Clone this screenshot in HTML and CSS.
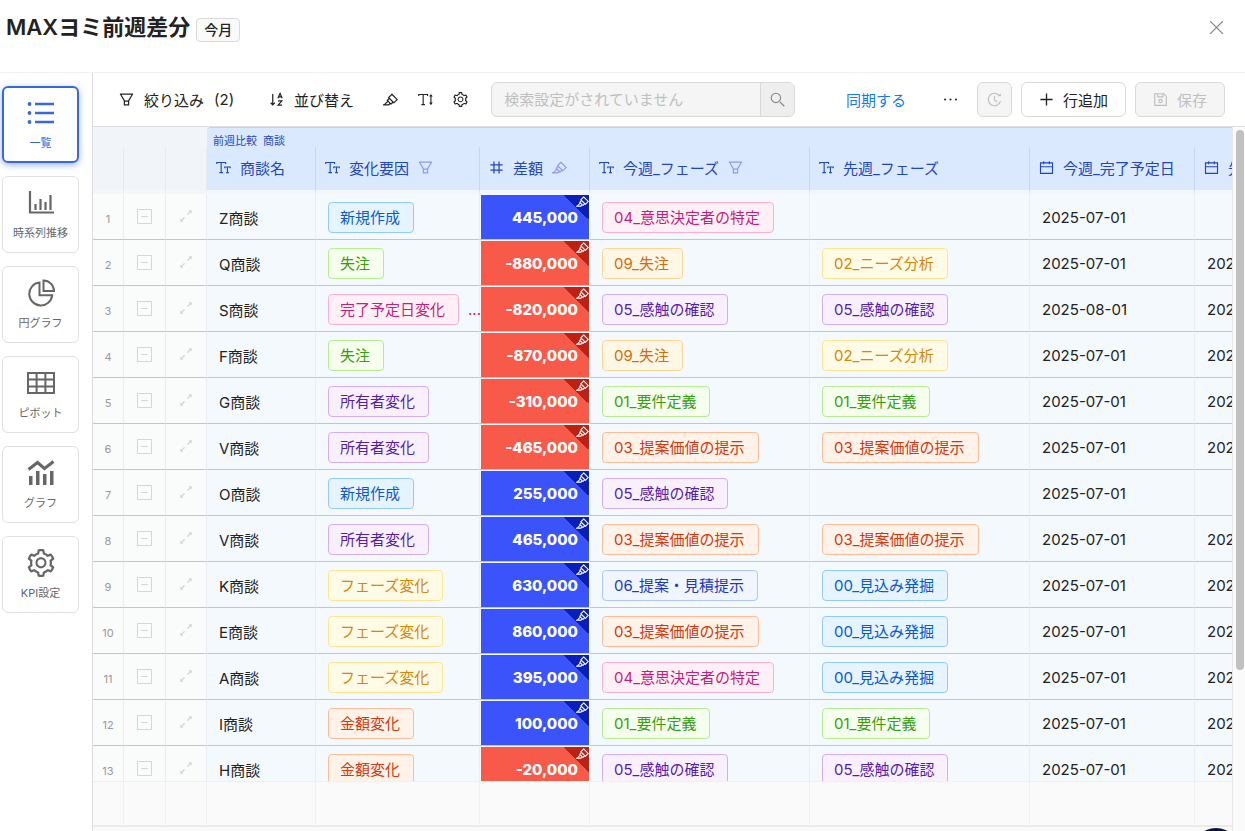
FILE: index.html
```html
<!DOCTYPE html>
<html lang="ja">
<head>
    <meta charset="UTF-8">
    <meta name="viewport" content="width=device-width, initial-scale=1.0">
    <title>MAXヨミ前週差分</title>
    <link rel="stylesheet" href="styles.css">
</head>
<body>
    <!-- アイコン定義 -->
    <svg class="icon-defs" aria-hidden="true">
        <symbol id="i-filter" viewBox="64 64 896 896"><path d="M880.1 154H143.9c-24.5 0-39.8 26.7-27.5 48L349 597.4V838c0 17.7 14.2 32 31.8 32h262.4c17.6 0 31.8-14.3 31.8-32V597.4L907.7 202c12.2-21.3-3.1-48-27.6-48zM603.4 798H420.6V642h182.9v156zm9.6-236.6l-9.5 16.6h-183l-9.5-16.6L212.7 226h598.6L613 561.4z"/></symbol>
        <symbol id="i-highlight" viewBox="64 64 896 896"><path d="M957.6 507.4L603.2 158.2a7.9 7.9 0 00-11.2 0L353.3 393.4a8.03 8.03 0 00-.1 11.3l.1.1 40 39.4-117.2 115.3a8.03 8.03 0 00-.1 11.3l.1.1 39.5 38.9-189.1 187H72.1c-4.4 0-8.1 3.6-8.1 8V860c0 4.4 3.6 8 8 8h344.9c2.1 0 4.1-.8 5.6-2.3l76.1-75.6 40.4 39.8a7.9 7.9 0 0011.2 0l117.1-115.6 40.1 39.5a7.9 7.9 0 0011.2 0l238.7-235.2c3.4-3 3.4-8 .3-11.2zM389.8 796.2H229.6l134.4-133 80.1 78.9-54.3 54.1zm154.8-62.1L373.2 565.2l68.6-67.6 171.4 168.9-68.6 67.6zM713.1 658L450.3 399.1 597.6 254l262.8 259-147.3 145z"/></symbol>
        <symbol id="i-setting" viewBox="64 64 896 896"><path d="M924.8 625.7l-65.5-56c3.1-19 4.7-38.4 4.7-57.8s-1.6-38.8-4.7-57.8l65.5-56a32.03 32.03 0 009.3-35.2l-.9-2.6a443.74 443.74 0 00-79.7-137.9l-1.8-2.1a32.12 32.12 0 00-35.1-9.5l-81.3 28.9c-30-24.6-63.5-44-99.7-57.6l-15.7-85a32.05 32.05 0 00-25.8-25.7l-2.7-.5c-52.1-9.4-106.9-9.4-159 0l-2.7.5a32.05 32.05 0 00-25.8 25.7l-15.8 85.4a351.86 351.86 0 00-99 57.4l-81.9-29.1a32 32 0 00-35.1 9.5l-1.8 2.1a446.02 446.02 0 00-79.7 137.9l-.9 2.6c-4.5 12.5-.8 26.5 9.3 35.2l66.3 56.6c-3.1 18.8-4.6 38-4.6 57.1 0 19.2 1.5 38.4 4.6 57.1L99 625.5a32.03 32.03 0 00-9.3 35.2l.9 2.6c18.1 50.4 44.9 96.9 79.7 137.9l1.8 2.1a32.12 32.12 0 0035.1 9.5l81.9-29.1c29.8 24.5 63.1 43.9 99 57.4l15.8 85.4a32.05 32.05 0 0025.8 25.7l2.7.5a449.4 449.4 0 00159 0l2.7-.5a32.05 32.05 0 0025.8-25.7l15.7-85a350 350 0 0099.7-57.6l81.3 28.9a32 32 0 0035.1-9.5l1.8-2.1c34.8-41.1 61.6-87.5 79.7-137.9l.9-2.6c4.5-12.3.8-26.3-9.3-35zM788.3 465.9c2.5 15.1 3.8 30.6 3.8 46.1s-1.3 31-3.8 46.1l-6.6 40.1 74.7 63.9a370.03 370.03 0 01-42.6 73.6L721 702.8l-31.4 25.8c-23.9 19.6-50.5 35-79.3 45.8l-38.1 14.3-17.9 97a377.5 377.5 0 01-85 0l-17.9-97.2-37.8-14.5c-28.5-10.8-55-26.2-78.7-45.7l-31.4-25.9-93.4 33.2c-17-22.9-31.2-47.6-42.6-73.6l75.5-64.5-6.5-40c-2.4-14.9-3.7-30.3-3.7-45.5 0-15.3 1.2-30.6 3.7-45.5l6.5-40-75.5-64.5c11.3-26.1 25.6-50.7 42.6-73.6l93.4 33.2 31.4-25.9c23.7-19.5 50.2-34.9 78.7-45.7l37.9-14.3 17.9-97.2c28.1-3.2 56.8-3.2 85 0l17.9 97 38.1 14.3c28.7 10.8 55.4 26.2 79.3 45.8l31.4 25.8 92.8-32.9c17 22.9 31.2 47.6 42.6 73.6L781.8 426l6.5 39.9zM512 326c-97.2 0-176 78.8-176 176s78.8 176 176 176 176-78.8 176-176-78.8-176-176-176zm79.2 255.2A111.6 111.6 0 01512 614c-29.9 0-58-11.7-79.2-32.8A111.6 111.6 0 01400 502c0-29.9 11.7-58 32.8-79.2C454 401.6 482.1 390 512 390c29.9 0 58 11.6 79.2 32.8A111.6 111.6 0 01624 502c0 29.9-11.7 58-32.8 79.2z"/></symbol>
        <symbol id="i-sort" viewBox="0 0 16 16"><path d="M4 2v11.500M1.800 11.500L4 13.700l2.200-2.200M9.500 6.600l2.300-5 2.300 5M10.300 5.200h3M9.700 9.500h4L9.700 14h4.200" fill="none" stroke="currentColor" stroke-width="1.300"/></symbol>
        <symbol id="i-fontsize" viewBox="0 0 16 16"><path d="M.8 4.200V2.600h9.400v1.600M5.500 2.600v10.800M3.600 13.400h3.800M13.800 3.600v8.800" fill="none" stroke="currentColor" stroke-width="1.200"/><path d="M11.900 4.800L13.800 2l1.900 2.800zM11.900 11.200l1.900 2.800 1.900-2.800z"/></symbol>
        <symbol id="i-text" viewBox="0 0 16 16"><path d="M.8 4.200V2.600h9.400v1.600M5.500 2.600v10.800M3.600 13.400h3.800M9.300 8.800V7.500h5.900v1.300M12.200 7.500v5.900M10.800 13.400h2.900" fill="none" stroke="currentColor" stroke-width="1.200"/></symbol>
        <symbol id="i-number" viewBox="0 0 16 16"><path d="M1.500 5.300h13M1.500 10.700h13M5.300 1.500v13M10.700 1.500v13" fill="none" stroke="currentColor" stroke-width="1.300"/></symbol>
        <symbol id="i-calendar" viewBox="0 0 16 16"><path d="M1.600 3h12.800v11.200H1.600zM1.600 7.200h12.800M5 1.200v3.400M11 1.200v3.400" fill="none" stroke="currentColor" stroke-width="1.200"/></symbol>
        <symbol id="i-search" viewBox="0 0 16 16"><path d="M10.500 10.500l4.700 4.700" fill="none" stroke="currentColor" stroke-width="1.400"/><circle cx="6.300" cy="6.300" r="5" fill="none" stroke="currentColor" stroke-width="1.200"/></symbol>
        <symbol id="i-history" viewBox="0 0 16 16"><path d="M13.300 4A6.600 6.600 0 1 0 14.400 9.800M8 4.200v4.200l2.800 2.200" fill="none" stroke="currentColor" stroke-width="1.200"/><path d="M11 4.500h3.800V1.500z"/></symbol>
        <symbol id="i-save" viewBox="0 0 16 16"><path d="M1.800 1.800h9.800l2.600 2.600v9.800H1.800zM5 1.800v3.400h5.600V1.800" fill="none" stroke="currentColor" stroke-width="1.200"/><circle cx="8" cy="9.700" r="1.800" fill="none" stroke="currentColor" stroke-width="1.200"/></symbol>
        <symbol id="i-plus" viewBox="0 0 16 16"><path d="M8 1.500v13M1.500 8h13" fill="none" stroke="currentColor" stroke-width="1.400"/></symbol>
        <symbol id="i-close" viewBox="0 0 16 16"><path d="M2 2l12 12M14 2l-12 12" fill="none" stroke="currentColor" stroke-width="1.300"/></symbol>
        <symbol id="i-more" viewBox="0 0 16 16"><circle cx="2.200" cy="8" r="1.100"/><circle cx="8" cy="8" r="1.100"/><circle cx="13.800" cy="8" r="1.100"/></symbol>
        <symbol id="i-minus" viewBox="0 0 16 16"><path d="M.5 .5h15v15H.5zM4.500 8h7" fill="none" stroke="currentColor"/></symbol>
        <symbol id="i-expand" viewBox="0 0 14 14"><path d="M8.400 5.600l3-3M5.600 8.400l-3 3" fill="none" stroke="currentColor" stroke-width="1.300"/><path d="M9.600 1.300h3.100v3.100zM1.300 9.600v3.100h3.100z"/></symbol>
        <symbol id="i-list" viewBox="0 0 28 28"><path d="M8 5h19M8 14h19M8 23h19" fill="none" stroke="currentColor" stroke-width="2.400"/><circle cx="2.500" cy="5" r="1.900"/><circle cx="2.500" cy="14" r="1.900"/><circle cx="2.500" cy="23" r="1.900"/></symbol>
        <symbol id="i-bars" viewBox="0 0 28 28"><path d="M3 2v21.500h24M8.500 21v-6M13.500 21V10M18.500 21v-8M23.500 21V6" fill="none" stroke="currentColor" stroke-width="2.200"/></symbol>
        <symbol id="i-pie" viewBox="0 0 28 28"><path d="M12.500 3.500A11.500 11.500 0 1 0 25.200 16.300H12.500zM16.500 1.500v10.500H27A10.600 10.600 0 0 0 16.500 1.500z" fill="none" stroke="currentColor" stroke-width="2"/></symbol>
        <symbol id="i-table" viewBox="0 0 28 28"><path d="M1 4h26v20H1zM1 10.600h26M1 17.400h26M9.600 4v20M18.400 4v20" fill="none" stroke="currentColor" stroke-width="2"/></symbol>
        <symbol id="i-graph" viewBox="0 0 28 28"><path d="M1.500 10.500l9-7 7 6 9-7" fill="none" stroke="currentColor" stroke-width="3"/><path d="M2 17h3.500v9H2zM9 12h3.500v14H9zM16 15h3.500v11H16zM23 12h3.500v14H23z"/></symbol>
    </svg>

    <header class="page-header">
        <h1>MAXヨミ前週差分</h1>
        <span class="period">今月</span>
        <button type="button" class="btn-plain btn-close" aria-label="閉じる"><svg class="icon"><use href="#i-close"/></svg></button>
    </header>

    <div class="layout">
        <nav class="sidebar">
            <a href="#" class="view-card active"><svg class="view-icon"><use href="#i-list"/></svg><span>一覧</span></a>
            <a href="#" class="view-card"><svg class="view-icon"><use href="#i-bars"/></svg><span>時系列推移</span></a>
            <a href="#" class="view-card"><svg class="view-icon"><use href="#i-pie"/></svg><span>円グラフ</span></a>
            <a href="#" class="view-card"><svg class="view-icon"><use href="#i-table"/></svg><span>ピボット</span></a>
            <a href="#" class="view-card"><svg class="view-icon"><use href="#i-graph"/></svg><span>グラフ</span></a>
            <a href="#" class="view-card"><svg class="view-icon"><use href="#i-setting"/></svg><span>KPI設定</span></a>
        </nav>

        <main class="main">
            <div class="toolbar">
                <div class="tools">
                    <button type="button" class="btn-plain"><svg class="icon"><use href="#i-filter"/></svg><span>絞り込み</span><span>(2)</span></button>
                    <button type="button" class="btn-plain"><svg class="icon"><use href="#i-sort"/></svg><span>並び替え</span></button>
                    <div class="icon-tools">
                        <button type="button" class="btn-plain" aria-label="ハイライト"><svg class="icon"><use href="#i-highlight"/></svg></button>
                        <button type="button" class="btn-plain" aria-label="文字サイズ"><svg class="icon"><use href="#i-fontsize"/></svg></button>
                        <button type="button" class="btn-plain" aria-label="設定"><svg class="icon"><use href="#i-setting"/></svg></button>
                    </div>
                </div>
                <form class="search">
                    <input type="text" aria-label="検索" placeholder="検索設定がされていません" disabled>
                    <button type="button" aria-label="検索する" disabled><svg class="icon"><use href="#i-search"/></svg></button>
                </form>
                <div class="actions">
                    <button type="button" class="btn-plain btn-sync">同期する</button>
                    <button type="button" class="btn-plain btn-more" aria-label="その他"><svg class="icon"><use href="#i-more"/></svg></button>
                    <button type="button" class="btn btn-square" aria-label="履歴" disabled><svg class="icon"><use href="#i-history"/></svg></button>
                    <button type="button" class="btn"><svg class="icon"><use href="#i-plus"/></svg>行追加</button>
                    <button type="button" class="btn" disabled><svg class="icon"><use href="#i-save"/></svg>保存</button>
                </div>
            </div>

            <div class="grid-area">
                <div class="grid">
                    <div class="grid-scroll">
                        <table>
                            <colgroup>
                                <col class="c-no"><col class="c-check"><col class="c-open"><col class="c-name"><col class="c-reason">
                                <col class="c-diff"><col class="c-phase"><col class="c-phase"><col class="c-date"><col class="c-date">
                            </colgroup>
                            <thead>
                                <tr class="group-row">
                                    <td colspan="3"></td>
                                    <th colspan="7" scope="colgroup"><span>前週比較</span><span>商談</span></th>
                                </tr>
                                <tr class="head-row">
                                    <td></td>
                                    <td></td>
                                    <td></td>
                                    <th scope="col"><div class="head"><svg class="icon"><use href="#i-text"/></svg>商談名</div></th>
                                    <th scope="col"><div class="head"><svg class="icon"><use href="#i-text"/></svg>変化要因<svg class="icon faded"><use href="#i-filter"/></svg></div></th>
                                    <th scope="col"><div class="head"><svg class="icon"><use href="#i-number"/></svg>差額<svg class="icon faded"><use href="#i-highlight"/></svg></div></th>
                                    <th scope="col"><div class="head"><svg class="icon"><use href="#i-text"/></svg>今週_フェーズ<svg class="icon faded"><use href="#i-filter"/></svg></div></th>
                                    <th scope="col"><div class="head"><svg class="icon"><use href="#i-text"/></svg>先週_フェーズ</div></th>
                                    <th scope="col"><div class="head"><svg class="icon"><use href="#i-calendar"/></svg>今週_完了予定日</div></th>
                                    <th scope="col"><div class="head"><svg class="icon"><use href="#i-calendar"/></svg>先週_完了予定日</div></th>
                                </tr>
                            </thead>
                            <tbody id="rows"></tbody>
                        </table>
                    </div>
                    <div class="grid-foot">
                        <span></span><span></span><span></span><span></span><span></span><span></span><span></span><span></span><span></span><span></span>
                    </div>
                </div>
                <div class="scrollbar"><div class="thumb"></div></div>
            </div>
        </main>
    </div>

    <button type="button" class="chat" aria-label="チャット"></button>

    <script>
        // 商談名, 変化要因, 差額, 今週フェーズ, 先週フェーズ, 今週完了予定日, 先週完了予定日
        const rows = [
            ['Z商談', '新規作成', 445000, '04_意思決定者の特定', '', '2025-07-01', ''],
            ['Q商談', '失注', -880000, '09_失注', '02_ニーズ分析', '2025-07-01', '2025-07-01'],
            ['S商談', '完了予定日変化', -820000, '05_感触の確認', '05_感触の確認', '2025-08-01', '2025-07-01'],
            ['F商談', '失注', -870000, '09_失注', '02_ニーズ分析', '2025-07-01', '2025-07-01'],
            ['G商談', '所有者変化', -310000, '01_要件定義', '01_要件定義', '2025-07-01', '2025-07-01'],
            ['V商談', '所有者変化', -465000, '03_提案価値の提示', '03_提案価値の提示', '2025-07-01', '2025-07-01'],
            ['O商談', '新規作成', 255000, '05_感触の確認', '', '2025-07-01', ''],
            ['V商談', '所有者変化', 465000, '03_提案価値の提示', '03_提案価値の提示', '2025-07-01', '2025-07-01'],
            ['K商談', 'フェーズ変化', 630000, '06_提案・見積提示', '00_見込み発掘', '2025-07-01', '2025-07-01'],
            ['E商談', 'フェーズ変化', 860000, '03_提案価値の提示', '00_見込み発掘', '2025-07-01', '2025-07-01'],
            ['A商談', 'フェーズ変化', 395000, '04_意思決定者の特定', '00_見込み発掘', '2025-07-01', '2025-07-01'],
            ['I商談', '金額変化', 100000, '01_要件定義', '01_要件定義', '2025-07-01', '2025-07-01'],
            ['H商談', '金額変化', -20000, '05_感触の確認', '05_感触の確認', '2025-07-01', '2025-07-01']
        ];

        const colors = {
            '新規作成': 'blue', '失注': 'green', '完了予定日変化': 'magenta', '所有者変化': 'purple',
            'フェーズ変化': 'yellow', '金額変化': 'orange',
            '00': 'blue', '01': 'green', '02': 'yellow', '03': 'orange',
            '04': 'magenta', '05': 'purple', '06': 'indigo', '09': 'gold'
        };

        function tag(text) {
            if (!text) return '';
            const color = colors[text] || colors[text.slice(0, 2)];
            return `<span class="tag ${color}">${text}</span>`;
        }

        function icon(name) {
            return `<svg class="icon"><use href="#i-${name}"/></svg>`;
        }

        document.getElementById('rows').innerHTML = rows.map((r, i) => `
            <tr>
                <td class="no">${i + 1}</td>
                <td class="tool"><button type="button" aria-label="行を選択">${icon('minus')}</button></td>
                <td class="tool small"><button type="button" aria-label="行を開く">${icon('expand')}</button></td>
                <td>${r[0]}</td>
                <td><div class="tags">${tag(r[1])}${r[1] === '完了予定日変化' ? '<span class="rest">...</span>' : ''}</div></td>
                <td class="diff ${r[2] < 0 ? 'minus' : 'plus'}"><div>${r[2].toLocaleString('en-US')}<i>${icon('highlight')}</i></div></td>
                <td>${tag(r[3])}</td>
                <td>${tag(r[4])}</td>
                <td>${r[5]}</td>
                <td>${r[6]}</td>
            </tr>`).join('');
    </script>
</body>
</html>
```
FILE: styles.css
```css
* {
    margin: 0;
    padding: 0;
    box-sizing: border-box;
}

body {
    display: flex;
    flex-direction: column;
    height: 100vh;
    overflow: hidden;
    font-family: Inter, 'Noto Sans CJK JP', sans-serif;
    font-size: 15px;
    color: #222;
    background-color: #fff;
}

button, input {
    font: inherit;
    color: inherit;
}

.icon-defs {
    position: absolute;
    width: 0;
    height: 0;
}

.icon {
    display: block;
    flex: none;
    width: 15px;
    height: 15px;
    fill: currentColor;
}

/* ヘッダー */
.page-header {
    display: flex;
    align-items: center;
    gap: 6px;
    height: 72px;
    padding: 0 20px 18px 6px;
}

.page-header h1 {
    font-size: 22px;
    line-height: 32px;
    font-weight: 600;
}

.period {
    height: 24px;
    margin-top: 6px;
    padding: 0 7px;
    font-size: 14px;
    font-weight: 500;
    line-height: 22px;
    background-color: #fafafa;
    border: 1px solid #d9d9d9;
    border-radius: 4px;
}

.btn-plain {
    display: flex;
    align-items: center;
    gap: 10px;
    background: none;
    border: none;
    white-space: nowrap;
    cursor: pointer;
}

.btn-close {
    margin-left: auto;
    color: #888;
}

.btn-close .icon {
    width: 17px;
    height: 17px;
}

/* レイアウト */
.layout {
    display: flex;
    flex: 1;
    min-height: 0;
    border-top: 1px solid #f0f0f0;
}

.sidebar {
    display: flex;
    flex-direction: column;
    gap: 13px;
    width: 92px;
    padding: 13px 13px 0 2px;
}

.view-card {
    display: flex;
    flex-direction: column;
    align-items: center;
    justify-content: center;
    gap: 8px;
    height: 77px;
    font-size: 11px;
    line-height: 16px;
    color: #666;
    text-decoration: none;
    white-space: nowrap;
    border: 1px solid #e0e0e0;
    border-radius: 6px;
}

.view-card.active {
    color: #3569df;
    border: 2px solid #3569df;
    box-shadow: 0 2px 6px rgba(53, 105, 223, 0.5);
}

.view-icon {
    width: 28px;
    height: 28px;
    fill: currentColor;
}

.main {
    display: flex;
    flex-direction: column;
    flex: 1;
    min-width: 0;
    border-left: 1px solid #ddd;
}

/* ツールバー */
.toolbar {
    display: flex;
    align-items: center;
    height: 54px;
    padding: 0 20px 0 26px;
    border-bottom: 1px solid #dcdfe3;
}

.tools {
    display: flex;
    align-items: center;
    gap: 35px;
}

.icon-tools {
    display: flex;
    gap: 20px;
    margin-left: -6px;
}

.search {
    display: flex;
    flex: 1;
    max-width: 304px;
    height: 35px;
    margin-left: 23px;
    background-color: #f5f5f5;
    border: 1px solid #d9d9d9;
    border-radius: 6px;
    overflow: hidden;
}

.search input {
    flex: 1;
    min-width: 0;
    padding: 0 12px;
    background: none;
    border: none;
}

.search input::placeholder {
    color: #bfbfbf;
}

.search button {
    display: flex;
    align-items: center;
    justify-content: center;
    width: 34px;
    color: #888;
    background-color: #eee;
    border: none;
    border-left: 1px solid #d9d9d9;
}

.actions {
    display: flex;
    align-items: center;
    gap: 9px;
    margin-left: auto;
}

.btn-sync {
    color: #1677ff;
}

.btn-more {
    padding: 0 10px 0 28px;
}

.btn {
    display: flex;
    align-items: center;
    justify-content: center;
    gap: 9px;
    height: 35px;
    padding: 0 17px;
    background-color: #fff;
    border: 1px solid #d9d9d9;
    border-radius: 6px;
    white-space: nowrap;
    cursor: pointer;
}

.btn:disabled {
    color: #bfbfbf;
    background-color: #f5f5f5;
}

.btn-square {
    width: 35px;
    padding: 0;
}

/* 表 */
.grid-area {
    display: flex;
    flex: 1;
    min-height: 0;
    background-color: #fafafa;
}

.grid {
    display: flex;
    flex-direction: column;
    flex: 1;
    min-width: 0;
    padding-bottom: 4px;
    overflow: hidden;
}

.grid-scroll {
    flex: 1;
    min-height: 0;
    overflow: hidden;
}

table {
    width: 1267px;
    table-layout: fixed;
    border-collapse: separate;
    border-spacing: 0;
}

.c-no { width: 31px; }
.c-check { width: 42px; }
.c-open { width: 41px; }
.c-name { width: 109px; }
.c-reason { width: 164px; }
.c-diff { width: 110px; }
.c-phase { width: 220px; }
.c-date { width: 165px; }

thead td {
    background-color: #f1f5f9;
    border-right: 1px solid #e5eaef;
}

thead th {
    font-weight: 400;
    text-align: left;
    color: #1d47c0;
    background-color: #dbe9fe;
}

.group-row td {
    border-right: none;
}

.group-row th {
    height: 20px;
    padding: 7px 6px 0;
    font-size: 11px;
    line-height: 12px;
    border-top: 1px solid #bdd3ee;
    border-top-left-radius: 4px;
}

.group-row span {
    margin-right: 6px;
}

.head-row td, .head-row th {
    height: 47px;
    padding: 0 10px 3px 9px;
    border-bottom: 4px solid #f5f6f9;
}

.head-row th {
    border-right: 1px solid #c5d9f5;
}

.head {
    display: flex;
    align-items: center;
    gap: 9px;
    white-space: nowrap;
}

.faded {
    color: #8f9be6;
}

tbody td {
    height: 46px;
    padding: 1px 12px 0;
    background-color: #f4f9fe;
    border-right: 1px solid #e8eef3;
    border-bottom: 1px solid #b9cacd;
    white-space: nowrap;
}

tbody .no, tbody .tool {
    padding: 0;
    text-align: center;
    background-color: #fafbfb;
}

tbody .no {
    padding-top: 4px;
    font-size: 11px;
    color: #999;
}

tbody .tool {
    padding-bottom: 3px;
}

.tool button {
    padding: 0;
    color: #d0d2d4;
    background: none;
    border: none;
    vertical-align: middle;
}

.tool.small .icon {
    width: 14px;
    height: 14px;
}

.tags {
    display: flex;
    align-items: center;
    gap: 9px;
}

.rest {
    color: #c41d7f;
}

tbody .diff {
    padding: 1px 0 0 1px;
    border-right-color: #fff;
}

.diff div {
    position: relative;
    display: flex;
    align-items: center;
    justify-content: flex-end;
    height: 44px;
    padding-right: 11px;
    font-size: 15px;
    font-weight: 800;
    color: #fff;
}

.diff.plus div {
    background-color: #3b53fb;
}

.diff.minus div {
    background-color: #f75a48;
}

/* 右上の三角マーク */
.diff i {
    position: absolute;
    top: 0;
    right: 0;
    width: 25px;
    height: 25px;
    background: linear-gradient(to top right, transparent 50%, #0a1fb8 50%);
}

.diff.minus i {
    background: linear-gradient(to top right, transparent 50%, #bd2116 50%);
}

.diff i .icon {
    width: 13px;
    height: 13px;
    margin-left: auto;
}

/* タグ */
.tag {
    display: inline-block;
    height: 31px;
    padding: 0 13px 0 11px;
    line-height: 29px;
    border: 1px solid;
    border-radius: 4px;
    vertical-align: middle;
}

.blue { color: #0958d9; background-color: #e6f4ff; border-color: #91caff; }
.green { color: #389e0d; background-color: #f6ffed; border-color: #b7eb8f; }
.magenta { color: #c41d7f; background-color: #fff0f6; border-color: #ffadd2; }
.purple { color: #531dab; background-color: #f9f0ff; border-color: #d3adf7; }
.yellow { color: #d48806; background-color: #fffbe6; border-color: #ffe58f; }
.gold { color: #d46b08; background-color: #fff7e6; border-color: #ffd591; }
.orange { color: #d4380d; background-color: #fff2e8; border-color: #ffbb96; }
.indigo { color: #1d39c4; background-color: #f0f5ff; border-color: #adc6ff; }

.grid-foot {
    display: grid;
    grid-template-columns: 31px 42px 41px 109px 164px 110px 220px 220px 165px 165px;
    height: 46px;
    border-top: 1px solid #eef1f4;
    border-bottom: 2px solid #ebebec;
}

.grid-foot span {
    border-right: 1px solid #f0f1f2;
}

.scrollbar {
    width: 13px;
    padding: 3px 1px 0 3px;
    border-left: 1px solid #e8e8e8;
}

.thumb {
    height: 540px;
    background-color: #c1c1c1;
    border-radius: 4px;
}

.chat {
    position: fixed;
    right: 4px;
    bottom: -47px;
    width: 50px;
    height: 50px;
    background-color: #0b1437;
    border: none;
    border-radius: 50%;
}
```
